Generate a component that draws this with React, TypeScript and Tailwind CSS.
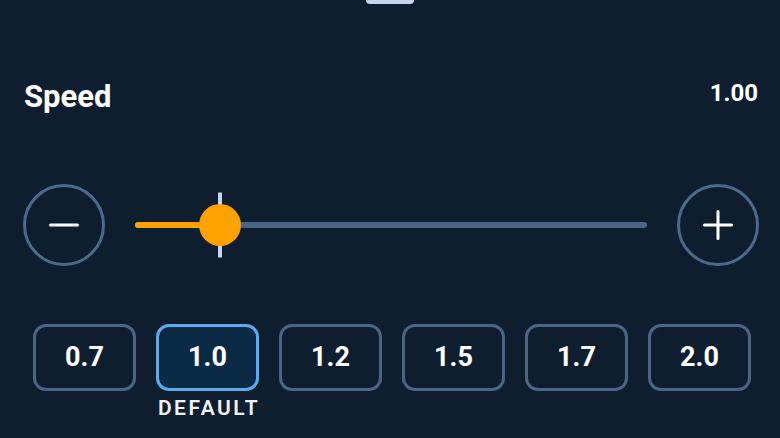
import React from "react";

const PRESETS = [0.7, 1.0, 1.2, 1.5, 1.7, 2.0];
const MIN = 0.5;
const MAX = 3.5;

function RoundButton({ kind }: { kind: "minus" | "plus" }) {
  return (
    <button className="flex h-[82px] w-[82px] shrink-0 items-center justify-center rounded-full border-[3px] border-[#4d6a8e]">
      <svg width="30" height="30" viewBox="0 0 30 30" fill="none" stroke="#ffffff" strokeWidth="3" strokeLinecap="round">
        <path d="M1.5 15h27" />
        {kind === "plus" && <path d="M15 1.5v27" />}
      </svg>
    </button>
  );
}

export default function App() {
  const value = 1.0;
  const pct = ((value - MIN) / (MAX - MIN)) * 100;

  return (
    <div
      className="flex h-[438px] w-[780px] flex-col overflow-hidden bg-[#0e1e2e] text-white"
      style={{ fontFamily: "Roboto, 'Noto Sans', sans-serif" }}
    >
      {/* sheet grabber */}
      <div className="mx-auto h-1 w-12 rounded-b-[4px] bg-[#c6d5ee]" />

      {/* title row */}
      <div className="mt-[77px] flex items-start justify-between pl-6 pr-[22px]">
        <span className="text-[31px] font-bold leading-none">Speed</span>
        <span className="text-[24px] font-bold leading-none">{value.toFixed(2)}</span>
      </div>

      {/* slider row */}
      <div className="mt-[72px] flex items-center pl-[23px] pr-[21px]">
        <RoundButton kind="minus" />
        <div className="relative mx-[30px] h-[6px] flex-1 rounded-full bg-[#4a6585]">
          <div
            className="absolute inset-y-0 left-0 rounded-full bg-[#ffa200]"
            style={{ width: `${pct}%` }}
          />
          {/* default marker */}
          <div
            className="absolute top-1/2 h-[65px] w-[4px] -translate-x-1/2 -translate-y-1/2 bg-[#c6d5ee]"
            style={{ left: `${pct}%` }}
          />
          {/* thumb */}
          <div
            className="absolute top-1/2 h-[42px] w-[42px] -translate-x-1/2 -translate-y-1/2 rounded-full bg-[#ffa200]"
            style={{ left: `${pct}%` }}
          />
        </div>
        <RoundButton kind="plus" />
      </div>

      {/* presets */}
      <div className="mt-[58px] flex items-start gap-[20px] pl-[33px]">
        {PRESETS.map((p) => {
          const active = p === value;
          return (
            <div key={p} className="flex w-[103px] flex-col items-center">
              <button
                className={
                  active
                    ? "flex h-[67px] w-full items-center justify-center rounded-[13px] border-[3px] border-[#5aabf0] bg-[#0b2a46] text-[27px] font-bold"
                    : "flex h-[67px] w-full items-center justify-center rounded-[13px] border-[3px] border-[#4a6587] text-[27px] font-bold"
                }
              >
                {p.toFixed(1)}
              </button>
              {active && (
                <span className="mt-[7px] pl-[3px] text-[21px] font-semibold leading-none tracking-[2.5px] text-[#eef2f7]">
                  DEFAULT
                </span>
              )}
            </div>
          );
        })}
      </div>
    </div>
  );
}
